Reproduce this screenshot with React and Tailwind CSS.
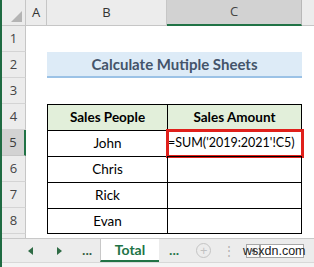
import React from 'react';

const rows = [
  { n: 1 },
  { n: 2, title: true },
  { n: 3 },
  { n: 4, head: true },
  { n: 5, b: 'John', c: "=SUM('2019:2021'!C5)", sel: true },
  { n: 6, b: 'Chris' },
  { n: 7, b: 'Rick' },
  { n: 8, b: 'Evan', last: true },
];

const cellFont = { fontFamily: 'Lato, "Open Sans", sans-serif' };

const RowHead = ({ n, sel }) => (
  <div
    className={`w-[24px] shrink-0 flex items-center justify-center text-[13px] border-b ${
      sel
        ? 'bg-[#d2d2d2] text-[#3a3a3a] border-r-2 border-r-[#217346] border-b-[#c6c6c6]'
        : 'bg-[#ececec] text-[#444] border-r border-r-[#c6c6c6] border-b-[#d4d4d4]'
    }`}
    style={{ fontFamily: '"Open Sans", sans-serif' }}
  >
    {n}
  </div>
);

const SheetRow = ({ row }) => {
  if (row.title) {
    return (
      <div className="flex h-[26px]">
        <RowHead n={row.n} />
        <div className="w-[21px] shrink-0" />
        <div
          className="w-[255px] shrink-0 bg-[#ddebf7] border-b-2 border-[#9bc2e6] flex items-center justify-center text-[15px] font-bold text-[#44546a]"
          style={cellFont}
        >
          Calculate Mutiple Sheets
        </div>
        <div className="w-[12px] shrink-0" />
      </div>
    );
  }
  if (!row.head && !row.b) {
    return (
      <div className="flex h-[26px]">
        <RowHead n={row.n} />
        <div className="flex-1" />
      </div>
    );
  }
  const edge = row.last ? 'border-b' : '';
  return (
    <div className="flex h-[26px]">
      <RowHead n={row.n} sel={row.sel} />
      <div className="w-[21px] shrink-0" />
      <div
        className={`w-[120px] shrink-0 border-l border-t border-black ${edge} flex items-center justify-center text-[13.5px] text-black ${
          row.head ? 'bg-[#e2efda] font-bold' : ''
        }`}
        style={cellFont}
      >
        {row.head ? 'Sales People' : row.b}
      </div>
      <div
        className={`relative w-[135px] shrink-0 border-l border-t border-r border-black ${edge} flex items-center text-black ${
          row.head ? 'bg-[#e2efda] font-bold justify-center text-[13.5px]' : 'justify-start text-[12.5px] whitespace-nowrap'
        }`}
        style={cellFont}
      >
        {row.head ? 'Sales Amount' : row.c || ''}
        {row.sel && (
          <div className="absolute -left-[2px] -top-[2px] -right-[3px] -bottom-[2px] border-[3px] border-[#e0201b]" />
        )}
      </div>
      <div className="w-[12px] shrink-0" />
    </div>
  );
};

const Tri = ({ dir }) => (
  <svg width="6" height="8" viewBox="0 0 6 8">
    {dir === 'l' ? (
      <path d="M5 0 L0 4 L5 8 Z" fill="#2f6b45" />
    ) : (
      <path d="M1 0 L6 4 L1 8 Z" fill="#2f6b45" />
    )}
  </svg>
);

export default function App() {
  return (
    <div className="w-[314px] h-[267px] bg-white flex overflow-hidden" style={{ fontFamily: '"Open Sans", sans-serif' }}>
      <div className="w-[2px] shrink-0 bg-[#1f6b42]" />
      <div className="flex-1 flex flex-col">
        {/* column headers */}
        <div className="flex h-[26px] text-[13px] text-[#333]">
          <div className="w-[24px] shrink-0 bg-[#ececec] border-r border-b border-[#c6c6c6] relative">
            <svg className="absolute right-[3px] bottom-[3px]" width="11" height="11" viewBox="0 0 11 11">
              <path d="M11 0 L11 11 L0 11 Z" fill="#b4b4b4" />
            </svg>
          </div>
          <div className="w-[21px] shrink-0 bg-[#ececec] border-r border-b border-[#c6c6c6] flex items-center justify-center">A</div>
          <div className="w-[120px] shrink-0 bg-[#ececec] border-r border-b border-[#c6c6c6] flex items-center justify-center">B</div>
          <div className="w-[135px] shrink-0 bg-[#d2d2d2] border-r border-r-[#b8b8b8] border-b-2 border-b-[#217346] flex items-center justify-center text-[#444]">C</div>
          <div className="flex-1 bg-[#ececec] border-b border-[#c6c6c6]" />
        </div>

        {rows.map((r) => (
          <SheetRow key={r.n} row={r} />
        ))}

        <div className="flex h-[4px]">
          <div className="w-[24px] shrink-0 bg-[#ececec] border-r border-[#c6c6c6]" />
        </div>

        {/* sheet tabs */}
        <div className="flex h-[24px] bg-[#ececec] border-t border-[#c8c8c8] items-stretch">
          <div className="w-[98px] shrink-0 flex items-center">
            <div className="w-[26px]" />
            <Tri dir="l" />
            <div className="w-[22px]" />
            <Tri dir="r" />
            <span className="ml-[20px] text-[12px] font-bold text-[#2f5a3e] leading-none">...</span>
          </div>
          <div
            className="w-[59px] shrink-0 bg-white border-l border-[#c8c8c8] border-b-2 border-b-[#217346] flex items-center justify-center text-[14px] font-bold text-[#217346]"
            style={cellFont}
          >
            Total
          </div>
          <div className="flex items-center flex-1 relative">
            <span className="ml-[10px] text-[12px] font-bold text-[#217346] leading-none">...</span>
            <div className="ml-[17px] w-[15px] h-[15px] rounded-full border border-[#c4c4c4] flex items-center justify-center text-[#c0c0c0] text-[13px] leading-none">
              +
            </div>
            <span className="ml-[12px] text-[#b0b0b0] text-[12px] leading-none">⋮</span>
            <div className="ml-[11px] h-[14px] w-[14px] border border-[#a8a8a8] bg-[#f8f8f8] flex items-center justify-center">
              <svg width="4" height="6" viewBox="0 0 4 6">
                <path d="M4 0 L0 3 L4 6 Z" fill="#888" />
              </svg>
            </div>
            <div className="h-[14px] flex-1 mr-[10px] bg-white border border-[#a8a8a8]" />
            <span
              className="absolute left-[84px] top-[6px] text-[12.5px] text-[#222] leading-none whitespace-nowrap"
              style={{ fontFamily: '"Liberation Sans", sans-serif' }}
            >
              wsxdn.com
            </span>
          </div>
        </div>
        <div className="flex-1 bg-[#f4f4f4] border-t border-[#d8d8d8]" />
      </div>
    </div>
  );
}
